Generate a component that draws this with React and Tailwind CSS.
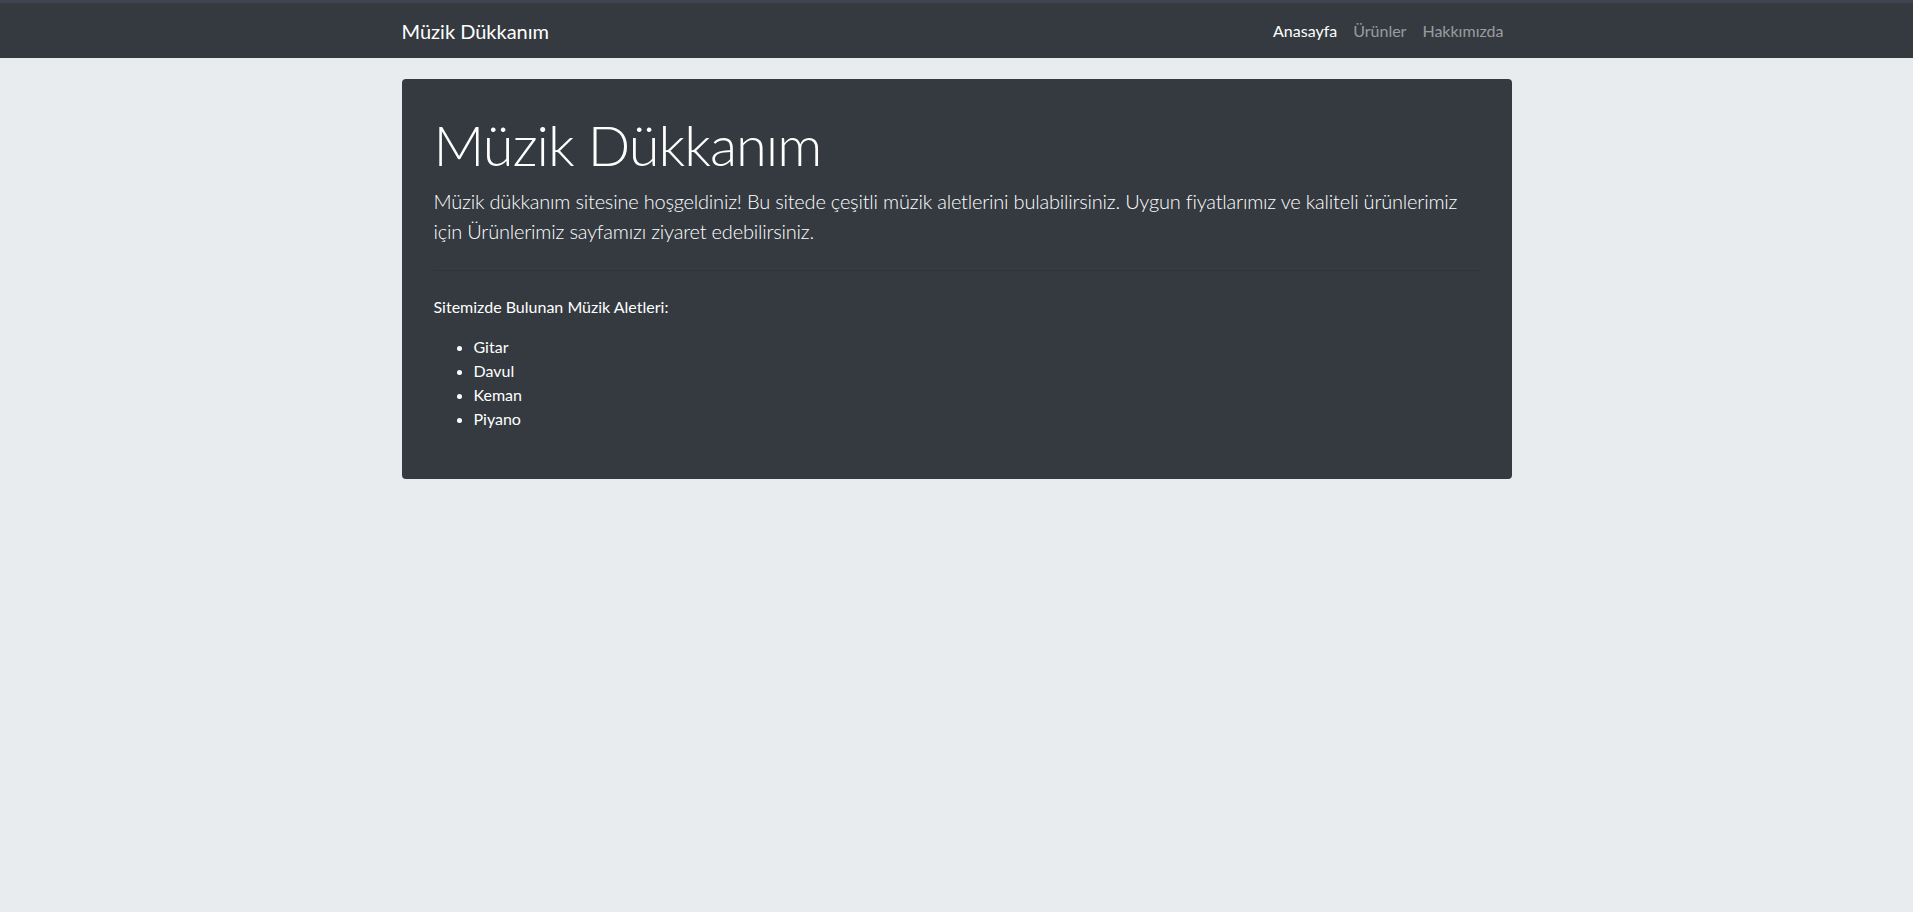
export default function App() {
  const font = { fontFamily: '"Segoe UI", Lato, "Noto Sans", sans-serif' };
  return (
    <div className="min-h-[912px] bg-[#e9ecef] text-white" style={font}>
      <nav className="h-[58px] border-t-[3px] border-[#3e4451] bg-[#343a40]">
        <div className="mx-auto flex h-[55px] w-[1110px] items-center justify-between">
          <a className="text-[20px] leading-[30px] text-white">Müzik Dükkanım</a>
          <ul className="flex text-[16px] leading-[24px]">
            <li><a className="block px-2 text-white">Anasayfa</a></li>
            <li><a className="block px-2 text-white/50">Ürünler</a></li>
            <li><a className="block px-2 text-white/50">Hakkımızda</a></li>
          </ul>
        </div>
      </nav>
      <div className="mx-auto w-[1110px] pt-[21px]">
        <div className="rounded-[4px] bg-[#343a40] px-8 py-8">
          <h1 className="mb-2 text-[56px] font-light leading-[1.2] tracking-[-1px]">Müzik Dükkanım</h1>
          <p className="text-[20px] font-light leading-[30px] tracking-[-0.2px] text-white">
            Müzik dükkanım sitesine hoşgeldiniz! Bu sitede çeşitli müzik aletlerini bulabilirsiniz. Uygun fiyatlarımız ve kaliteli ürünlerimiz için Ürünlerimiz sayfamızı ziyaret edebilirsiniz.
          </p>
          <hr className="my-6 border-t border-black/10" />
          <p className="mb-4 text-[16px] leading-[24px]">Sitemizde Bulunan Müzik Aletleri:</p>
          <ul className="mb-4 list-disc pl-10 text-[16px] leading-[24px]">
            <li>Gitar</li>
            <li>Davul</li>
            <li>Keman</li>
            <li>Piyano</li>
          </ul>
        </div>
      </div>
    </div>
  );
}
